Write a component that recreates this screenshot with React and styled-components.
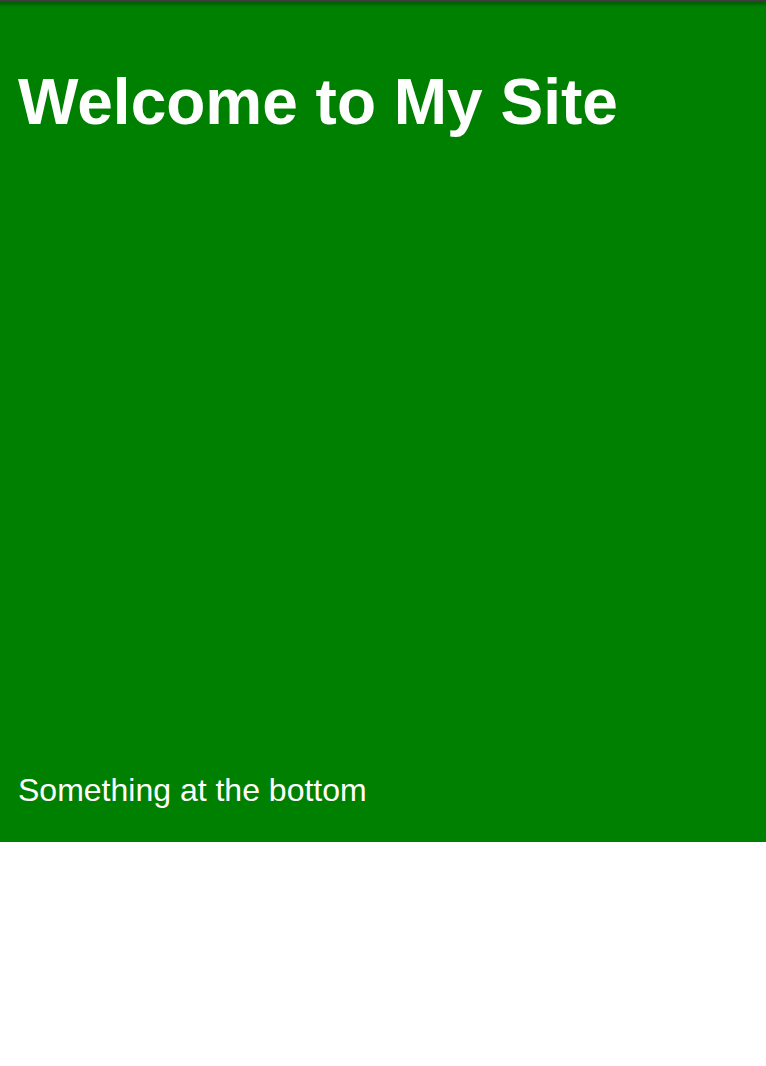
import React from "react";
import styled, { createGlobalStyle } from "styled-components";

const GlobalStyle = createGlobalStyle`
  html, body {
    margin: 0;
    padding: 0;
    background: #fff;
  }
  body {
    font-family: "Liberation Sans", Arial, Helvetica, sans-serif;
  }
`;

const Hero = styled.section`
  display: flex;
  flex-direction: column;
  justify-content: space-between;
  height: 842px;
  box-sizing: border-box;
  padding: 65px 18px 33px;
  color: #fff;
  border-top: 2px solid #3d3d3d;
  background: linear-gradient(rgba(0, 0, 0, 0.3), rgba(0, 0, 0, 0) 5px),
    #008000;
`;

const Title = styled.h1`
  margin: -2px 0 0;
  font-size: 64px;
  font-weight: 700;
  line-height: normal;
`;

const Footer = styled.p`
  margin: 0;
  font-size: 32px;
  font-weight: 400;
  line-height: normal;
`;

export default function App() {
  return (
    <>
      <GlobalStyle />
      <Hero>
        <Title>Welcome to My Site</Title>
        <Footer>Something at the bottom</Footer>
      </Hero>
    </>
  );
}
